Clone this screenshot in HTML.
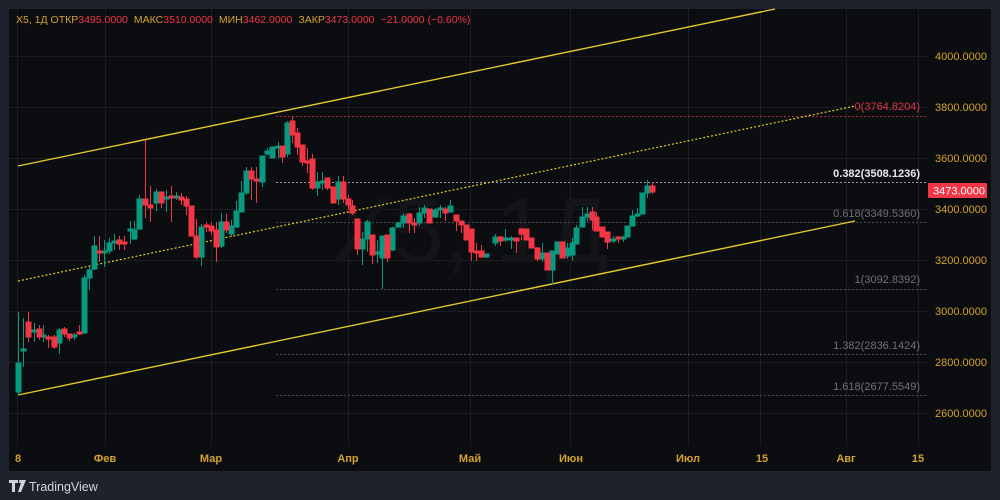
<!DOCTYPE html>
<html><head><meta charset="utf-8"><style>
body{margin:0;width:1000px;height:500px;background:#1e222d;overflow:hidden;font-family:"Liberation Sans","DejaVu Sans",sans-serif}
svg{position:absolute;left:0;top:0}
</style></head><body>
<svg width="1000" height="500" xmlns="http://www.w3.org/2000/svg" font-family="Liberation Sans, DejaVu Sans, sans-serif">
<rect x="9" y="9" width="982" height="462" fill="#0c0d10"/>
<g stroke="#1c1e24" stroke-width="1">
<path d="M9 56.5H928M9 107.5H928M9 158.5H928M9 209.5H928M9 260.5H928M9 311.5H928M9 362.5H928M9 413.5H928"/>
<path d="M17.5 9V446M105.5 9V446M211.5 9V446M348.5 9V446M470.5 9V446M570.5 9V446M688.5 9V446M760.5 9V446M846.5 9V446M918.5 9V446"/>
</g>
<text x="470" y="262" font-size="92" fill="#141519" text-anchor="middle">X5, 1Д</text>
<g stroke-dasharray="2,2" stroke-width="1">
<path d="M276 116.5H928" stroke="#b2283a"/>
<path d="M276 182.5H928" stroke="#9a9ca3"/>
<path d="M276 222.5H928" stroke="#4a4c52"/>
<path d="M276 289.5H928" stroke="#4a4c52"/>
<path d="M276 354.5H928" stroke="#4a4c52"/>
<path d="M276 395.5H928" stroke="#4a4c52"/>
</g>
<g font-size="11" text-anchor="end">
<text x="920" y="110" fill="#e0374a">0(3764.8204)</text>
<text x="920" y="177" fill="#e8e9ec" font-weight="600">0.382(3508.1236)</text>
<text x="920" y="217" fill="#6f7178">0.618(3349.5360)</text>
<text x="920" y="283" fill="#6f7178">1(3092.8392)</text>
<text x="920" y="349" fill="#6f7178">1.382(2836.1424)</text>
<text x="920" y="390" fill="#6f7178">1.618(2677.5549)</text>
</g>
<g stroke="#e3cb2a" stroke-width="1.4" fill="none">
<path d="M18 166L775 9"/>
<path d="M18 395L855 221"/>
<path d="M18 281L855 106" stroke-dasharray="2,2" stroke-width="1.2"/>
</g>
<g stroke="#089981" fill="#089981" stroke-width="1">
<path d="M18.5 312V395M23.5 318V367M34.5 323V342M43.5 325V342M59.5 328V354M74.5 333V340M84.5 275V334M89.5 267V290M94.5 236V270M104.5 240V267M109.5 238V254M114.5 234V250M130.5 221V244M134.5 221V240M139.5 195V230M156.5 189V211M166.5 190V212M176.5 192V200M201.5 224V266M221.5 213V248M231.5 220V236M236.5 201V228M241.5 181V212M246.5 167V195M262.5 156V187M267.5 148V155M272.5 147V158M278.5 142V158M287.5 121V157M317.5 172V196M322.5 172V190M338.5 176V205M362.5 232V265M367.5 220V252M377.5 240V263M382.5 236V289M392.5 227V251M398.5 222V228M403.5 213V228M419.5 207V226M424.5 205V218M435.5 208V218M440.5 205V218M450.5 200V212M486.5 254V258M495.5 234V246M505.5 229V242M511.5 236V249M542.5 243V262M552.5 251V285M557.5 242V254M567.5 243V259M572.5 238V261M576.5 225V244M582.5 207V227M587.5 207V222M613.5 236V243M623.5 236V242M627.5 226V237M632.5 210V226M637.5 208V217M642.5 193V214M647.5 180V198" fill="none"/>
<rect x="16" y="363" width="5" height="29"/><rect x="21" y="349" width="5" height="2"/><rect x="32" y="330" width="5" height="2"/><rect x="41" y="335" width="5" height="2"/><rect x="57" y="330" width="5" height="13"/><rect x="72" y="335" width="5" height="2"/><rect x="82" y="278" width="5" height="55"/><rect x="87" y="270" width="5" height="8"/><rect x="92" y="246" width="5" height="23"/><rect x="102" y="251" width="5" height="2"/><rect x="107" y="243" width="5" height="8"/><rect x="112" y="241" width="5" height="2"/><rect x="128" y="229" width="5" height="2"/><rect x="132" y="230" width="5" height="9"/><rect x="137" y="199" width="5" height="30"/><rect x="154" y="192" width="5" height="11"/><rect x="164" y="197" width="5" height="2"/><rect x="174" y="196" width="5" height="2"/><rect x="199" y="227" width="5" height="30"/><rect x="219" y="222" width="5" height="24"/><rect x="229" y="226" width="5" height="8"/><rect x="234" y="211" width="5" height="16"/><rect x="239" y="193" width="5" height="19"/><rect x="244" y="171" width="5" height="22"/><rect x="260" y="156" width="5" height="26"/><rect x="265" y="151" width="5" height="3"/><rect x="270" y="147" width="5" height="11"/><rect x="276" y="146" width="5" height="2"/><rect x="285" y="123" width="5" height="31"/><rect x="315" y="182" width="5" height="6"/><rect x="320" y="181" width="5" height="2"/><rect x="336" y="182" width="5" height="17"/><rect x="360" y="239" width="5" height="10"/><rect x="365" y="222" width="5" height="17"/><rect x="375" y="252" width="5" height="2"/><rect x="380" y="236" width="5" height="22"/><rect x="390" y="228" width="5" height="22"/><rect x="396" y="223" width="5" height="4"/><rect x="401" y="216" width="5" height="7"/><rect x="417" y="213" width="5" height="10"/><rect x="422" y="208" width="5" height="5"/><rect x="433" y="210" width="5" height="7"/><rect x="438" y="208" width="5" height="2"/><rect x="448" y="206" width="5" height="6"/><rect x="484" y="254" width="5" height="3"/><rect x="493" y="237" width="5" height="6"/><rect x="503" y="238" width="5" height="2"/><rect x="509" y="238" width="5" height="2"/><rect x="540" y="253" width="5" height="6"/><rect x="550" y="251" width="5" height="19"/><rect x="555" y="242" width="5" height="12"/><rect x="565" y="248" width="5" height="8"/><rect x="570" y="243" width="5" height="12"/><rect x="574" y="228" width="5" height="16"/><rect x="580" y="217" width="5" height="10"/><rect x="585" y="214" width="5" height="3"/><rect x="611" y="239" width="5" height="2"/><rect x="621" y="237" width="5" height="2"/><rect x="625" y="226" width="5" height="11"/><rect x="630" y="216" width="5" height="10"/><rect x="635" y="214" width="5" height="2"/><rect x="640" y="193" width="5" height="21"/><rect x="645" y="186" width="5" height="7"/>
</g>
<g stroke="#f23645" fill="#f23645" stroke-width="1">
<path d="M28.5 312V342M39.5 325V340M48.5 335V348M54.5 335V349M64.5 327V337M69.5 334V341M79.5 325V335M99.5 236V262M119.5 236V250M124.5 236V250M145.5 140V218M150.5 186V222M161.5 192V208M171.5 186V222M181.5 193V205M186.5 196V215M191.5 206V236M196.5 219V259M206.5 222V232M211.5 222V235M216.5 222V262M226.5 214V233M251.5 167V200M256.5 167V203M282.5 146V163M292.5 116V143M297.5 128V155M302.5 145V166M307.5 148V173M312.5 154V190M327.5 178V190M333.5 187V203M343.5 176V203M348.5 195V210M352.5 200V215M357.5 219V255M372.5 235V264M387.5 235V262M409.5 213V233M414.5 218V233M429.5 209V223M445.5 207V221M456.5 215V231M461.5 221V233M466.5 225V240M471.5 229V261M476.5 243V261M481.5 245V258M500.5 236V246M516.5 238V253M521.5 228V240M526.5 229V240M531.5 238V248M537.5 247V261M547.5 253V270M562.5 242V258M592.5 207V230M596.5 212V231M602.5 227V237M607.5 232V249M618.5 236V243M652.5 182V194" fill="none"/>
<rect x="26" y="322" width="5" height="15"/><rect x="37" y="329" width="5" height="8"/><rect x="46" y="337" width="5" height="2"/><rect x="52" y="337" width="5" height="10"/><rect x="62" y="329" width="5" height="5"/><rect x="67" y="334" width="5" height="4"/><rect x="77" y="332" width="5" height="2"/><rect x="97" y="251" width="5" height="2"/><rect x="117" y="240" width="5" height="4"/><rect x="122" y="242" width="5" height="2"/><rect x="143" y="199" width="5" height="6"/><rect x="148" y="205" width="5" height="3"/><rect x="159" y="192" width="5" height="11"/><rect x="169" y="196" width="5" height="2"/><rect x="179" y="197" width="5" height="3"/><rect x="184" y="199" width="5" height="7"/><rect x="189" y="206" width="5" height="30"/><rect x="194" y="236" width="5" height="21"/><rect x="204" y="225" width="5" height="2"/><rect x="209" y="226" width="5" height="5"/><rect x="214" y="230" width="5" height="17"/><rect x="224" y="222" width="5" height="8"/><rect x="249" y="171" width="5" height="8"/><rect x="254" y="179" width="5" height="2"/><rect x="280" y="146" width="5" height="11"/><rect x="290" y="121" width="5" height="14"/><rect x="295" y="133" width="5" height="14"/><rect x="300" y="145" width="5" height="17"/><rect x="305" y="161" width="5" height="2"/><rect x="310" y="159" width="5" height="29"/><rect x="325" y="178" width="5" height="10"/><rect x="331" y="187" width="5" height="16"/><rect x="341" y="182" width="5" height="17"/><rect x="346" y="199" width="5" height="6"/><rect x="350" y="206" width="5" height="7"/><rect x="355" y="219" width="5" height="30"/><rect x="370" y="235" width="5" height="20"/><rect x="385" y="235" width="5" height="23"/><rect x="407" y="214" width="5" height="9"/><rect x="412" y="223" width="5" height="2"/><rect x="427" y="209" width="5" height="14"/><rect x="443" y="209" width="5" height="4"/><rect x="454" y="215" width="5" height="6"/><rect x="459" y="221" width="5" height="4"/><rect x="464" y="225" width="5" height="15"/><rect x="469" y="229" width="5" height="23"/><rect x="474" y="251" width="5" height="2"/><rect x="479" y="251" width="5" height="6"/><rect x="498" y="237" width="5" height="4"/><rect x="514" y="238" width="5" height="3"/><rect x="519" y="229" width="5" height="5"/><rect x="524" y="229" width="5" height="11"/><rect x="529" y="238" width="5" height="10"/><rect x="535" y="248" width="5" height="11"/><rect x="545" y="253" width="5" height="17"/><rect x="560" y="242" width="5" height="16"/><rect x="590" y="212" width="5" height="8"/><rect x="594" y="217" width="5" height="14"/><rect x="600" y="227" width="5" height="10"/><rect x="605" y="232" width="5" height="10"/><rect x="616" y="237" width="5" height="2"/><rect x="650" y="186" width="5" height="6"/>
</g>
<g font-size="11" fill="#d4a22e">
<text x="935" y="60">4000.0000</text>
<text x="935" y="111">3800.0000</text>
<text x="935" y="162">3600.0000</text>
<text x="935" y="213">3400.0000</text>
<text x="935" y="264">3200.0000</text>
<text x="935" y="315">3000.0000</text>
<text x="935" y="366">2800.0000</text>
<text x="935" y="417">2600.0000</text>
</g>
<rect x="928" y="183" width="59" height="15" rx="1" fill="#f23645"/>
<text x="933" y="194.5" font-size="11" fill="#fff">3473.0000</text>
<g font-size="11" fill="#d4a22e" font-weight="bold" text-anchor="middle">
<text x="18" y="462">8</text>
<text x="105" y="462">Фев</text>
<text x="211" y="462">Мар</text>
<text x="348" y="462">Апр</text>
<text x="470" y="462">Май</text>
<text x="571" y="462">Июн</text>
<text x="688" y="462">Июл</text>
<text x="762" y="462">15</text>
<text x="846" y="462">Авг</text>
<text x="918" y="462">15</text>
</g>
<text x="16" y="23" font-size="10.5"><tspan fill="#d4a22e">X5, 1Д  ОТКР</tspan><tspan fill="#f23645">3495.0000</tspan><tspan fill="#d4a22e" dx="6">МАКС</tspan><tspan fill="#f23645">3510.0000</tspan><tspan fill="#d4a22e" dx="6">МИН</tspan><tspan fill="#f23645">3462.0000</tspan><tspan fill="#d4a22e" dx="6">ЗАКР</tspan><tspan fill="#f23645">3473.0000</tspan><tspan fill="#f23645" dx="6">−21.0000 (−0.60%)</tspan></text>
<g fill="#d1d4dc">
<path d="M9 480h9v3h-3v9h-3v-9h-3z"/>
<circle cx="20.5" cy="481.5" r="1.6"/>
<path d="M22 480h4l-5 12h-3z"/>
</g>
<text x="29" y="491" font-size="12.5" fill="#d1d4dc">TradingView</text>
</svg>
</body></html>
